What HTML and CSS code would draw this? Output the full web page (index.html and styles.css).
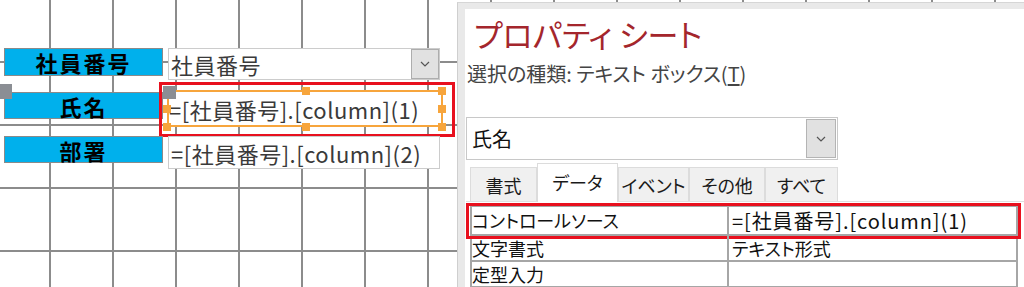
FILE: index.html
```html
<!DOCTYPE html>
<html lang="ja">
<head>
  <meta charset="UTF-8">
  <title>プロパティ シート</title>
  <link rel="stylesheet" href="styles.css">
</head>
<body>
  <div class="screen">
    <div class="design">
      <div class="row row-first">
        <div class="label">社員番号</div>
        <div class="field combo">
          <span class="field-text">社員番号</span>
          <span class="drop">
            <svg width="10" height="6" viewBox="0 0 10 6"><path d="M1 1 L5 5 L9 1" fill="none" stroke="#555" stroke-width="1.2"/></svg>
          </span>
        </div>
      </div>
      <div class="row row-second">
        <div class="label">氏名<span class="move-handle"></span></div>
        <div class="field selected">
          <span class="field-text">=[社員番号].[column](1)</span>
          <span class="grip grip-tl"></span>
          <span class="grip grip-tm"></span>
          <span class="grip grip-tr"></span>
          <span class="grip grip-ml"></span>
          <span class="grip grip-mr"></span>
          <span class="grip grip-bl"></span>
          <span class="grip grip-bm"></span>
          <span class="grip grip-br"></span>
          <span class="red-mark design-mark"></span>
        </div>
      </div>
      <div class="row row-third">
        <div class="label">部署</div>
        <div class="field">
          <span class="field-text">=[社員番号].[column](2)</span>
        </div>
      </div>
    </div>

    <div class="sheet">
      <div class="sheet-inner">
        <h1 class="sheet-title">プロパティ シート</h1>
        <div class="sel-type">選択の種類: テキスト ボックス(<u>T</u>)</div>
        <div class="obj-combo">
          <span class="obj-name">氏名</span>
          <span class="obj-drop">
            <svg width="10" height="6" viewBox="0 0 10 6"><path d="M1 1 L5 5 L9 1" fill="none" stroke="#555" stroke-width="1.2"/></svg>
          </span>
        </div>
        <div class="tabs">
          <div class="tab" style="width: 67px">書式</div>
          <div class="tab active" style="width: 81px">データ</div>
          <div class="tab" style="width: 71px">イベント</div>
          <div class="tab" style="width: 76px">その他</div>
          <div class="tab" style="width: 73px">すべて</div>
        </div>
        <div class="props">
          <div class="prop prop-marked">
            <span class="prop-name">コントロールソース</span>
            <span class="prop-value">=[社員番号].[column](1)</span>
            <span class="red-mark sheet-mark"></span>
          </div>
          <div class="prop">
            <span class="prop-name">文字書式</span>
            <span class="prop-value">テキスト形式</span>
          </div>
          <div class="prop">
            <span class="prop-name">定型入力</span>
            <span class="prop-value"></span>
          </div>
        </div>
      </div>
    </div>
  </div>
</body>
</html>
```

FILE: styles.css
```css
body {
  margin: 0;
  font-family: 'Noto Sans CJK JP', 'Noto Sans', sans-serif;
  background: white;
  overflow: hidden;
}

/* the design grid runs under everything */
.screen {
  display: flex;
  width: 1024px;
  height: 287px;
  overflow: hidden;
  background-color: white;
  background-image:
    linear-gradient(to right, #8c8c8c 2px, transparent 2px),
    linear-gradient(to bottom, #8c8c8c 2px, transparent 2px);
  background-size: 63px 63px;
  background-position: 49px 61px;
}

.design {
  width: 457px;
  flex-shrink: 0;
  padding-top: 48px;
  box-sizing: border-box;
}

.row {
  display: flex;
  align-items: flex-start;
}

.row-second {
  margin-top: 10px;
}

.row-third {
  margin-top: 9px;
}

.label {
  position: relative;
  width: 159px;
  height: 28px;
  margin-left: 4px;
  box-sizing: border-box;
  background-color: #00b0ec;
  border: 1px solid #8a8a8a;
  color: black;
  font-size: 22px;
  font-weight: bold;
  letter-spacing: 2px;
  line-height: 26px;
  text-align: center;
}

.row-second .label {
  margin-top: 2px;
  height: 27px;
}

.row-third .label {
  height: 27px;
}

.move-handle {
  position: absolute;
  left: -5px;
  top: -9px;
  width: 12px;
  height: 15px;
  background-color: #8b8e94;
}

.field {
  position: relative;
  width: 272px;
  height: 33px;
  margin-left: 5px;
  box-sizing: border-box;
  background-color: white;
  border: 1px solid #cccccc;
  display: flex;
  align-items: center;
}

.field-text {
  padding-left: 2px;
  font-size: 22px;
  letter-spacing: 0.5px;
  color: #3a3a3a;
  white-space: nowrap;
}

.combo {
  height: 32px;
}

.drop {
  margin-left: auto;
  width: 28px;
  height: 30px;
  box-sizing: border-box;
  background-color: #e1e1e1;
  border: 1px solid #adadad;
  display: flex;
  align-items: center;
  justify-content: center;
}

.selected {
  width: 276px;
  height: 37px;
  margin-left: 4px;
  border: 2px solid #f7a53c;
}

.selected .field-text {
  padding-left: 0;
}

.grip {
  position: absolute;
  width: 8px;
  height: 8px;
  background-color: #f7a53c;
}

.grip-tl {
  left: -6px;
  top: -6px;
  width: 13px;
  height: 13px;
  background-color: #8b8e94;
}

.grip-tm { left: 133px; top: -5px; }
.grip-tr { right: -5px; top: -5px; }
.grip-ml { left: -6px; top: 13px; }
.grip-mr { right: -5px; top: 13px; }
.grip-bl { left: -6px; bottom: -6px; }
.grip-bm { left: 133px; bottom: -6px; }
.grip-br { right: -5px; bottom: -6px; }

.red-mark {
  position: absolute;
  border: 3px solid #e8101e;
  pointer-events: none;
}

.design-mark {
  left: -10px;
  top: -10px;
  right: -14px;
  bottom: -12px;
}

/* property sheet */
.sheet {
  flex: 1;
  display: flex;
  margin-top: 2px;
  background-color: #e9e9e9;
  border-left: 1px solid #cfcfcf;
  border-top: 1px solid #d6d6d6;
  padding: 6px 0 0 7px;
}

.sheet-inner {
  flex: 1;
  background-color: white;
  padding-left: 1px;
  font-feature-settings: "palt";
}

.sheet-title {
  margin: 5px 0 0 8px;
  font-size: 31px;
  font-weight: normal;
  line-height: 40px;
  color: #a4262c;
}

.sel-type {
  margin: 7px 0 0 1px;
  font-size: 20px;
  line-height: 26px;
  color: #444444;
}

.sel-type u {
  text-underline-offset: 2px;
}

.obj-combo {
  width: 372px;
  height: 43px;
  margin-top: 30px;
  box-sizing: border-box;
  border: 1px solid #c8c8c8;
  display: flex;
  align-items: center;
}

.obj-name {
  padding-left: 5px;
  font-size: 20px;
  color: #111111;
}

.obj-drop {
  margin-left: auto;
  margin-right: 1px;
  width: 30px;
  height: 39px;
  box-sizing: border-box;
  background-color: #e1e1e1;
  border: 1px solid #b4b4b4;
  display: flex;
  align-items: center;
  justify-content: center;
}

.tabs {
  display: flex;
  align-items: flex-end;
  height: 38px;
  margin-top: 3px;
  padding-left: 4px;
  border-bottom: 1px solid #e0e0e0;
}

.tab {
  height: 34px;
  box-sizing: border-box;
  background-color: #f0f0f0;
  border: 1px solid #dcdcdc;
  border-bottom: none;
  font-size: 18px;
  line-height: 34px;
  text-align: center;
  color: #1a1a1a;
}

.tab.active {
  height: 39px;
  margin-bottom: -1px;
  background-color: white;
  line-height: 36px;
}

.props {
  margin: 3px 6px 0 4px;
  border: 2px solid #a6a6a6;
  border-bottom: none;
}

.prop {
  position: relative;
  display: flex;
  height: 24px;
  border-bottom: 2px solid #a6a6a6;
  font-size: 18px;
  line-height: 24px;
  color: #111111;
}

.prop-marked {
  height: 27px;
  line-height: 27px;
}

.prop-name {
  width: 255px;
  padding-left: 0;
  border-right: 2px solid #a6a6a6;
  white-space: nowrap;
}

.prop-value {
  flex: 1;
  padding-left: 3px;
  white-space: nowrap;
}

.prop-marked .prop-value {
  font-size: 20px;
  letter-spacing: 0.9px;
}

.sheet-mark {
  left: -6px;
  top: -4px;
  right: -5px;
  bottom: -5px;
}
```
